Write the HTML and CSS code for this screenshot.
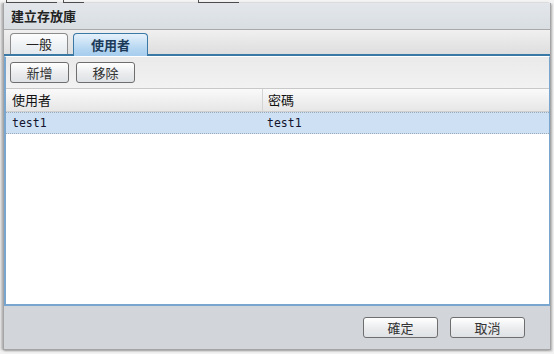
FILE: index.html
```html
<!DOCTYPE html>
<html lang="zh-Hant">
<head>
    <meta charset="UTF-8">
    <title>建立存放庫</title>
    <link rel="stylesheet" href="styles.css">
</head>
<body>
    <div class="backdrop">
        <span class="mark m1"></span>
        <span class="mark m2"></span>
        <span class="mark m3"></span>
    </div>
    <div class="window">
        <div class="title">建立存放庫</div>
        <div class="tabs">
            <div class="tab">一般</div>
            <div class="tab active">使用者</div>
        </div>
        <div class="panel">
            <div class="toolbar">
                <button class="btn">新增</button>
                <button class="btn">移除</button>
            </div>
            <div class="grid">
                <div class="grid-head">
                    <div class="col-user">使用者</div>
                    <div class="col-pass">密碼</div>
                </div>
                <div class="grid-row selected">
                    <div class="col-user">test1</div>
                    <div class="col-pass">test1</div>
                </div>
            </div>
        </div>
        <div class="footer">
            <button class="btn wide">確定</button>
            <button class="btn wide">取消</button>
        </div>
    </div>
</body>
</html>
```

FILE: styles.css
```css
body {
    margin: 0;
    background-color: #f2f2f2;
    font-family: "Noto Sans CJK TC", "Noto Sans", sans-serif;
    font-size: 12px;
    color: #222;
    width: 554px;
    height: 354px;
    overflow: hidden;
    position: relative;
}
/* bits of the page behind the dialog, peeking out at the top */
.backdrop {
    height: 3px;
    display: flex;
    gap: 6px;
    background-color: #f4f4f4;
}
.mark {
    height: 2px;
    border-bottom: 1px solid #555;
    border-left: 1px solid #555;
}
.m1 { width: 50px; margin-left: 6px; }
.m2 { width: 20px; }
.m3 { width: 40px; margin-left: 108px; }
.window {
    position: absolute;
    left: 3px;
    top: 3px;
    width: 548px;
    height: 347px;
    border: 1px solid #a4a4a4;
    border-top: 0;
    box-sizing: border-box;
    background-color: #d2d6da;
    display: flex;
    flex-direction: column;
    box-shadow: -2px 0 2px rgba(0,0,0,0.25), 1px 1px 2px rgba(0,0,0,0.3);
}
.title {
    height: 26px;
    line-height: 26px;
    padding-left: 7px;
    font-weight: bold;
    font-size: 13px;
    color: #222;
    background: linear-gradient(#e3e7eb, #d9dee3);
    border-bottom: 1px solid #a9a9a9;
    flex-shrink: 0;
}
.tabs {
    height: 24px;
    display: flex;
    align-items: flex-end;
    gap: 5px;
    padding-left: 6px;
    background: linear-gradient(#f0f0f0, #dedede);
    border-bottom: 2px solid #3a78a6;
    flex-shrink: 0;
}
.tab {
    width: 56px;
    height: 20px;
    line-height: 20px;
    text-align: center;
    font-size: 13px;
    color: #222;
    border: 1px solid #8c8c8c;
    border-bottom: 0;
    border-radius: 4px 4px 0 0;
    background: linear-gradient(#fdfdfd, #e3e9ee);
}
.tab.active {
    width: 73px;
    height: 22px;
    line-height: 22px;
    margin-bottom: -2px;
    font-weight: bold;
    color: #1c3b5a;
    border-color: #3a78a6;
    background: linear-gradient(#e6f1fb, #b3d5f1 70%, #a6cdee);
}
.panel {
    flex: 1;
    display: flex;
    flex-direction: column;
    border-top: 1px solid #fff;
    border-left: 2px solid #78a6cf;
    border-right: 1px solid #78a6cf;
    border-bottom: 2px solid #78a6cf;
    background-color: #fff;
}
.toolbar {
    height: 31px;
    display: flex;
    align-items: center;
    gap: 7px;
    padding-left: 4px;
    background: linear-gradient(#eaeaea, #f2f2f2);
    border-bottom: 1px solid #c8c8c8;
}
.btn {
    width: 59px;
    height: 21px;
    padding: 0;
    font-family: "Noto Sans CJK TC", "Noto Sans", sans-serif;
    font-size: 13px;
    color: #333;
    border: 1px solid #6e6e6e;
    border-radius: 3px;
    background: linear-gradient(#ffffff, #e8eaec 60%, #dfe2e5);
}
.grid {
    flex: 1;
}
.grid-head {
    height: 22px;
    display: flex;
    background: linear-gradient(#fafafa, #e6e6e6);
    border-bottom: 1px solid #cfcfcf;
    font-size: 13px;
    color: #111;
}
.grid-head div {
    line-height: 22px;
}
.col-user {
    width: 250px;
    padding-left: 6px;
    border-right: 1px solid #d4d4d4;
}
.col-pass {
    flex: 1;
    padding-left: 5px;
}
.grid-row {
    height: 20px;
    display: flex;
    font-family: "DejaVu Sans Mono", monospace;
    font-size: 11.5px;
    color: #14142e;
}
.grid-row div {
    line-height: 20px;
    border-right: 0;
}
.grid-row.selected {
    background-color: #cde0f4;
    border-top: 1px dotted #9aa9b8;
    border-bottom: 1px dotted #9aa9b8;
}
.footer {
    height: 43px;
    display: flex;
    justify-content: flex-end;
    align-items: center;
    gap: 12px;
    padding-right: 25px;
    flex-shrink: 0;
}
.btn.wide {
    width: 75px;
}
```
